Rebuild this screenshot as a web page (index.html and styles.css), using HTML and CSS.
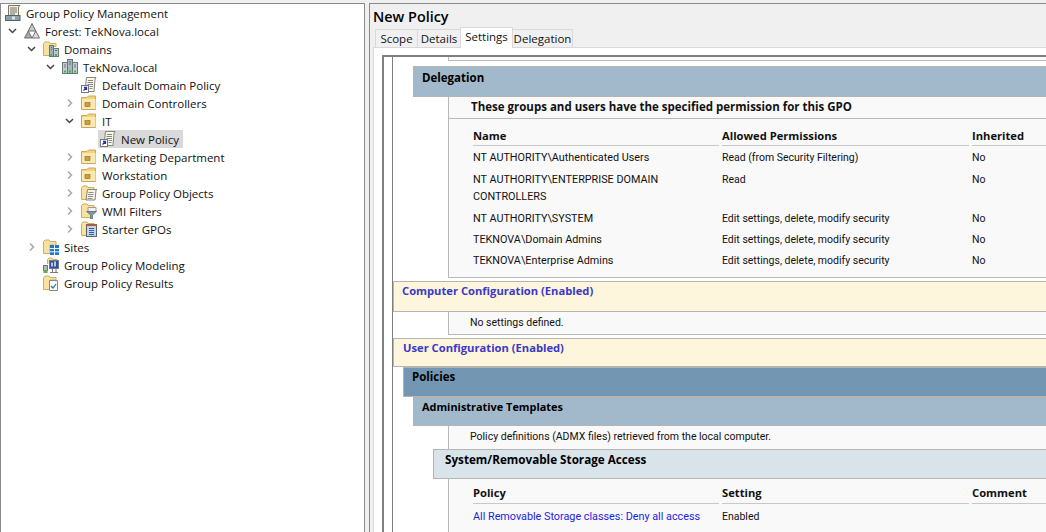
FILE: index.html
```html
<!DOCTYPE html>
<html lang="en">
<head>
<meta charset="utf-8">
<title>Group Policy Management</title>
<link rel="stylesheet" href="styles.css">
</head>
<body>
<svg class="sprite" xmlns="http://www.w3.org/2000/svg">
  <symbol id="down" viewBox="0 0 19 18"><path d="M6 7l3.500 3.500L13 7" fill="none" stroke="#444" stroke-width="1.500"/></symbol>
  <symbol id="right" viewBox="0 0 19 18"><path d="M8 5.500l3.500 3.500L8 12.500" fill="none" stroke="#a8a8a8" stroke-width="1.500"/></symbol>
  <symbol id="gpm" viewBox="0 0 16 16">
    <path d="M3.500 .5h11.500l-1.500 1.500v9h-10z" fill="#f7f1dc" stroke="#7d7460"/>
    <path d="M5 3h7M5 5h7M5 7h7M5 9h5" stroke="#6f6f6f"/>
    <rect x=".5" y="10.500" width="14.500" height="5" fill="#8fa0a8" stroke="#55636a"/>
    <rect x="7" y="11.500" width="3" height="3" fill="#dfe6ea"/>
  </symbol>
  <symbol id="forest" viewBox="0 0 16 16">
    <path d="M8 .5l3.800 7.500H4.200z" fill="#c8c8c8" stroke="#6f6f6f"/>
    <path d="M4.200 8L8 15H.5z" fill="#a9a9a9" stroke="#6f6f6f"/>
    <path d="M11.800 8l3.700 7H8z" fill="#dcdcdc" stroke="#6f6f6f"/>
  </symbol>
  <symbol id="domains" viewBox="0 0 16 16">
    <path d="M.5 14.500V2.500L2 1h4l1 1.500h6v3H8.500v9z" fill="#f9e2a0" stroke="#cfae60"/>
    <rect x="6.500" y="4.500" width="4" height="11" fill="#9fb0b5" stroke="#66787d"/>
    <rect x="10.500" y="7.500" width="5" height="8" fill="#b9c6ca" stroke="#66787d"/>
    <path d="M7.500 14h1.500M12 14h2" stroke="#35c13a" stroke-width="2"/>
    <path d="M8 6.500h1M8 8.500h1M12 9.500h2" stroke="#5c6c70"/>
  </symbol>
  <symbol id="server" viewBox="0 0 16 16">
    <rect x="5.500" y=".5" width="5" height="14" fill="#a7b6bb" stroke="#66787d"/>
    <rect x=".5" y="3.500" width="5" height="11" fill="#c2ced1" stroke="#66787d"/>
    <rect x="10.500" y="3.500" width="5" height="11" fill="#c2ced1" stroke="#66787d"/>
    <path d="M2 12.500h2M7 12.500h2M12 12.500h2" stroke="#35c13a" stroke-width="2"/>
    <path d="M2 6h2M7 3h2M12 6h2M2 8h2M7 5h2M12 8h2" stroke="#66787d"/>
  </symbol>
  <symbol id="gpo" viewBox="0 0 16 16">
    <path d="M5.500 .5H15l-1 1.500-1 12.500H4z" fill="#fbf8ea" stroke="#85857a"/>
    <path d="M7 3.500h5M6.500 5.500h5.500M6.500 7.500h5.500M8.500 9.500h3.500M8.500 11.500h3" stroke="#868686"/>
    <rect x=".5" y="8.500" width="7" height="7" fill="#fff" stroke="#777"/>
    <path d="M2.500 13.500l3-3M3 10.500h2.500V13" fill="none" stroke="#2337b5" stroke-width="1.300"/>
  </symbol>
  <symbol id="ou" viewBox="0 0 16 16">
    <path d="M.5 14.500V2.500h5.500l1.500-1.500h7v13.500z" fill="#f4d27a" stroke="#cba95c"/>
    <rect x="1" y="4" width="13.500" height="10" fill="#fbe8b0"/>
    <rect x="4" y="7.500" width="5" height="4" fill="#c99f3f" stroke="#8f6d21" stroke-width=".6"/>
  </symbol>
  <symbol id="folder-gpo" viewBox="0 0 16 16">
    <path d="M.5 14.500V2.500L2 1h4l1 1.500h6v12z" fill="#f9e2a0" stroke="#cfae60"/>
    <path d="M6.500 4.500H16l-1 1-1 9.500H5z" fill="#f8f5e8" stroke="#85857a"/>
    <path d="M7.500 7.500h5M7 9.500h5.500M7 11.500h5M6.500 13.500h5" stroke="#8e8e8e"/>
  </symbol>
  <symbol id="folder-wmi" viewBox="0 0 16 16">
    <path d="M.5 14.500V2.500L2 1h4l1 1.500h6v6h-3v6z" fill="#f9e2a0" stroke="#cfae60"/>
    <path d="M7 4.500h8v4H7z" fill="#f1f1f1" stroke="#9a9a9a"/>
    <path d="M5.500 8.500h10l-4 3.500v4h-2v-4z" fill="#7d97a8" stroke="#566a77" stroke-width=".7"/>
  </symbol>
  <symbol id="folder-starter" viewBox="0 0 16 16">
    <path d="M.5 14.500V2.500L2 1h4l1 1.500h6v2H6v10z" fill="#f9e2a0" stroke="#cfae60"/>
    <rect x="5.500" y="4.500" width="10" height="11" fill="#c3d4e4" stroke="#59636e"/>
    <rect x="5" y="3" width="11" height="2" fill="#a15f46"/>
    <path d="M8 7.500h5M8 9.500h5M8 11.500h5M8 13.500h5" stroke="#285ea6"/>
  </symbol>
  <symbol id="sites" viewBox="0 0 16 16">
    <path d="M.5 14.500V2.500L2 1h4l1 1.500h6V6H7v8.500z" fill="#f9e2a0" stroke="#cfae60"/>
    <rect x="7" y="6" width="9" height="10" fill="#2377c9"/>
    <path d="M11.500 6v10M7 9.500h9M7 12.800h9" stroke="#e8f3fb"/>
  </symbol>
  <symbol id="model" viewBox="0 0 16 16">
    <path d="M4.500 7V2.500L6 1h3l1 1.500h4V4" fill="#f9e2a0" stroke="#cfae60"/>
    <rect x=".5" y="8.500" width="4" height="5" fill="#b0b8bd" stroke="#70787d"/>
    <rect x=".5" y="13" width="4" height="3" fill="#5fae4a"/>
    <rect x="6.500" y="3.500" width="9" height="8" fill="#2d4f9f" stroke="#6c7a8a"/>
    <path d="M9 5.500v4M12 4.500v5" stroke="#e5edf8" stroke-width="1.500"/>
    <path d="M9.500 12v3.500M13 12v3.500M7 15.500h8" stroke="#777"/>
  </symbol>
  <symbol id="results" viewBox="0 0 16 16">
    <path d="M.5 14.500V2.500L2 1h4l1 1.500h6V5H7v9.500z" fill="#f9e2a0" stroke="#cfae60"/>
    <path d="M6.500 5.500h8v10h-8z" fill="#fafafa" stroke="#7f8a92"/>
    <path d="M8 11l2 2 3-4" fill="none" stroke="#2b6d9f" stroke-width="1.200"/>
  </symbol>
</svg>

<main class="app">
  <nav class="tree">
    <div class="row l0"><span class="node"><svg class="ico"><use href="#gpm"/></svg><span>Group Policy Management</span></span></div>
    <div class="row l1"><svg class="chev"><use href="#down"/></svg><span class="node"><svg class="ico"><use href="#forest"/></svg><span>Forest: TekNova.local</span></span></div>
    <div class="row l2"><svg class="chev"><use href="#down"/></svg><span class="node"><svg class="ico"><use href="#domains"/></svg><span>Domains</span></span></div>
    <div class="row l3"><svg class="chev"><use href="#down"/></svg><span class="node"><svg class="ico"><use href="#server"/></svg><span>TekNova.local</span></span></div>
    <div class="row l4"><span class="chev"></span><span class="node"><svg class="ico"><use href="#gpo"/></svg><span>Default Domain Policy</span></span></div>
    <div class="row l4"><svg class="chev"><use href="#right"/></svg><span class="node"><svg class="ico"><use href="#ou"/></svg><span>Domain Controllers</span></span></div>
    <div class="row l4"><svg class="chev"><use href="#down"/></svg><span class="node"><svg class="ico"><use href="#ou"/></svg><span>IT</span></span></div>
    <div class="row l5"><span class="chev"></span><span class="node sel"><svg class="ico"><use href="#gpo"/></svg><span>New Policy</span></span></div>
    <div class="row l4"><svg class="chev"><use href="#right"/></svg><span class="node"><svg class="ico"><use href="#ou"/></svg><span>Marketing Department</span></span></div>
    <div class="row l4"><svg class="chev"><use href="#right"/></svg><span class="node"><svg class="ico"><use href="#ou"/></svg><span>Workstation</span></span></div>
    <div class="row l4"><svg class="chev"><use href="#right"/></svg><span class="node"><svg class="ico"><use href="#folder-gpo"/></svg><span>Group Policy Objects</span></span></div>
    <div class="row l4"><svg class="chev"><use href="#right"/></svg><span class="node"><svg class="ico"><use href="#folder-wmi"/></svg><span>WMI Filters</span></span></div>
    <div class="row l4"><svg class="chev"><use href="#right"/></svg><span class="node"><svg class="ico"><use href="#folder-starter"/></svg><span>Starter GPOs</span></span></div>
    <div class="row l2"><svg class="chev"><use href="#right"/></svg><span class="node"><svg class="ico"><use href="#sites"/></svg><span>Sites</span></span></div>
    <div class="row l2"><span class="chev"></span><span class="node"><svg class="ico"><use href="#model"/></svg><span>Group Policy Modeling</span></span></div>
    <div class="row l2"><span class="chev"></span><span class="node"><svg class="ico"><use href="#results"/></svg><span>Group Policy Results</span></span></div>
  </nav>

  <section class="pane">
    <h1 class="title">New Policy</h1>
    <div class="tabs">
      <span class="tab t-scope">Scope</span>
      <span class="tab t-details">Details</span>
      <span class="tab t-settings active">Settings</span>
      <span class="tab t-deleg">Delegation</span>
    </div>
    <div class="panel">
      <div class="doc">
        <div class="page">
          <div class="block frag"></div>

          <h2 class="bar lvl2 gap-top">Delegation</h2>
          <div class="block">
            <div class="lead">These groups and users have the specified permission for this GPO</div>
            <div class="grid deleg">
              <div class="th">Name</div><div class="th">Allowed Permissions</div><div class="th">Inherited</div>
              <div class="td">NT AUTHORITY\Authenticated Users</div><div class="td">Read (from Security Filtering)</div><div class="td">No</div>
              <div class="td">NT AUTHORITY\ENTERPRISE DOMAIN CONTROLLERS</div><div class="td">Read</div><div class="td">No</div>
              <div class="td">NT AUTHORITY\SYSTEM</div><div class="td">Edit settings, delete, modify security</div><div class="td">No</div>
              <div class="td">TEKNOVA\Domain Admins</div><div class="td">Edit settings, delete, modify security</div><div class="td">No</div>
              <div class="td">TEKNOVA\Enterprise Admins</div><div class="td">Edit settings, delete, modify security</div><div class="td">No</div>
            </div>
          </div>

          <h2 class="bar cfg first-cfg">Computer Configuration (Enabled)</h2>
          <div class="block note">No settings defined.</div>

          <h2 class="bar cfg second-cfg">User Configuration (Enabled)</h2>
          <h2 class="bar lvl1">Policies</h2>
          <h2 class="bar lvl2 admx">Administrative Templates</h2>
          <div class="block note admx-note">Policy definitions (ADMX files) retrieved from the local computer.</div>
          <h2 class="bar lvl3">System/Removable Storage Access</h2>
          <div class="block last">
            <div class="grid policy">
              <div class="th">Policy</div><div class="th">Setting</div><div class="th">Comment</div>
              <div class="td"><a class="link" href="#">All Removable Storage classes: Deny all access</a></div><div class="td">Enabled</div><div class="td"></div>
            </div>
          </div>
        </div>
      </div>
    </div>
  </section>
</main>
</body>
</html>
```
FILE: styles.css
```css
* { box-sizing: border-box; }
html, body { margin: 0; height: 100%; overflow: hidden; }
body {
  background: #f0f0f0;
  font-family: "Open Sans", "Noto Sans", sans-serif;
  font-size: 11.5px;
  color: #111;
}
.sprite { display: none; }
.app {
  display: flex;
  height: 532px;
  padding-top: 3px;
  gap: 4px;
}

/* Tree */
.tree {
  flex: 0 0 365px;
  background: #fff;
  border: solid #8a8a8a;
  border-width: 1px 1px 0 1px;
}
.row { display: flex; align-items: center; height: 18px; white-space: nowrap; }
.l0 { margin-left: 2px; }
.l1 { margin-left: 2px; }
.l2 { margin-left: 21px; }
.l3 { margin-left: 40px; }
.l4 { margin-left: 59px; }
.l5 { margin-left: 78px; }
.chev { flex: 0 0 19px; width: 19px; height: 18px; display: block; }
.node { display: flex; align-items: center; gap: 5px; height: 18px; padding: 0 4px 0 2px; }
.node.sel { background: #d9d9d9; }
.ico { flex: 0 0 16px; width: 16px; height: 16px; display: block; }

/* Right pane */
.pane {
  flex: 1;
  min-width: 0;
  border: solid #8a8a8a;
  border-width: 1px 0 0 1px;
  display: flex;
  flex-direction: column;
}
.title {
  margin: 0;
  height: 23px;
  padding: 4px 0 0 3px;
  font-size: 14.4px;
  line-height: 18px;
  font-weight: 600;
  color: #000;
}
.tabs { display: flex; align-items: flex-end; height: 20px; padding-left: 5px; position: relative; z-index: 1; }
.tab {
  height: 18px;
  background: #f0f0f0;
  border: 1px solid #d9d9d9;
  border-bottom: 0;
  border-right: 0;
  display: flex;
  align-items: center;
  justify-content: center;
  line-height: 16px;
}
.t-scope { width: 42px; }
.t-details { width: 43px; }
.t-settings { width: 53px; }
.t-deleg { width: 60px; border-right: 1px solid #d9d9d9; }
.tab.active { height: 21px; background: #fff; padding-bottom: 2px; border-right: 1px solid #d9d9d9; margin-bottom: -1px; }
.active + .tab { border-left: 0; }
.panel {
  flex: 1;
  min-height: 0;
  margin-left: 3px;
  background: #fff;
  border: solid #d9d9d9;
  border-width: 1px 0 0 1px;
  padding: 7px 0 0 8px;
}
.doc {
  height: 100%;
  border: solid #7f7f7f;
  border-width: 2px 0 0 2px;
  background: #fff;
  overflow: hidden;
}
.page {
  height: 100%;
  margin-left: 8px;
  border-left: 1px solid #7f7f7f;
}

/* Report */
.block {
  margin-left: 55px;
  background: #f9f9f9;
  border: solid #b9b9b9;
  border-width: 0 0 1px 1px;
}
.frag { height: 4px; }
.bar {
  margin: 0;
  display: flex;
  align-items: flex-start;
  border: 1px solid #b4b4b4;
  border-right: 0;
  font-size: 11.5px;
  font-weight: 700;
  line-height: 16px;
  color: #000;
}
.gap-top { margin-top: 5px; }
.lvl1 { margin-left: 10px; height: 30px; padding: 1px 0 0 8px; background: #7397b2; }
.lvl2 { margin-left: 20px; height: 31px; padding: 3px 0 0 8px; background: #a2b9cb; }
.lvl3 { margin-left: 40px; height: 30px; padding: 1px 0 0 11px; background: #d9e4ea; font-size: 11.7px; }
.cfg { height: 31px; padding: 1px 0 0 8px; background: #fdf5dc; color: #3a38c8; font-size: 11.2px; }
.first-cfg { margin-top: 3px; }
.second-cfg { margin-top: 3px; padding: 1px 0 0 9px; height: 29px; }
.admx { height: 29px; padding-top: 1px; font-size: 10.9px; }
.lead { height: 22px; padding: 2px 0 0 22px; font-weight: 700; line-height: 16px; border-bottom: 1px solid #b9b9b9; }
.grid {
  display: grid;
  grid-template-columns: 246px 247px 1fr;
  column-gap: 3px;
  margin-left: 24px;
}
.deleg { padding: 8px 0 7px; }
.policy { padding: 5px 0 0; }
.th { font-size: 11.2px; font-weight: 700; line-height: 18px; height: 19px; border-bottom: 1px solid #c8c8c8; }
.policy .th { height: 20px; }
.td { font-family: Roboto, "Open Sans", sans-serif; font-size: 10.5px; padding: 3px 0 1px; line-height: 17px; }
.td:nth-child(3n+1) { font-size: 10.8px; }
.deleg .td:nth-child(-n+9) { padding-bottom: 2px; }
.policy .td { padding-top: 4px; white-space: nowrap; }
.note { font-family: Roboto, "Open Sans", sans-serif; font-size: 10.5px; height: 23px; padding: 3px 0 0 21px; line-height: 16px; }
.admx-note { border-bottom: 0; }
.last { height: 60px; border-bottom: 0; }
.link { color: #1c22e0; text-decoration: none; }
```
